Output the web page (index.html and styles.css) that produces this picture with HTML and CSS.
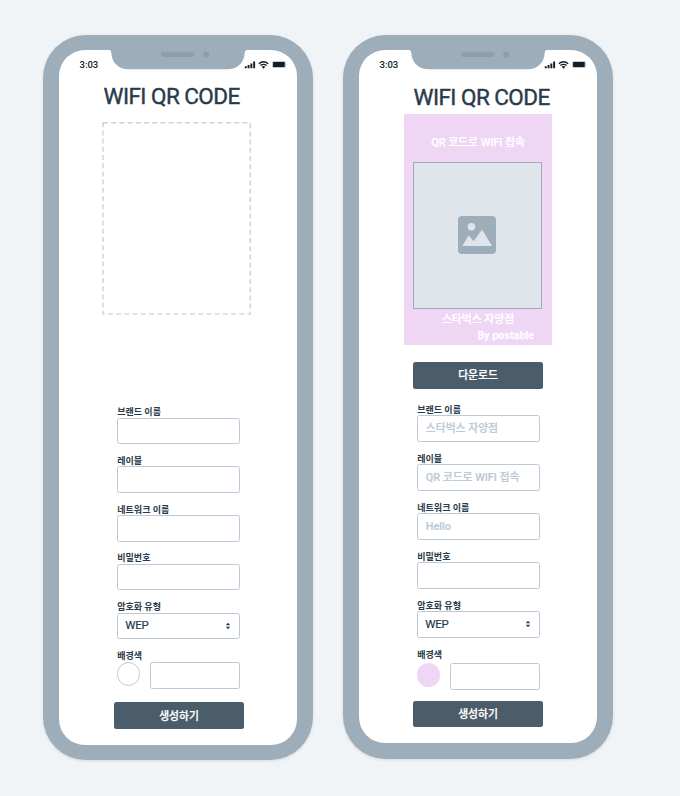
FILE: index.html
```
<!DOCTYPE html>
<html lang="ko">
<head>
<meta charset="utf-8">
<title>WIFI QR CODE</title>
<link rel="stylesheet" href="styles.css">
</head>
<body>
<svg class="defs" width="0" height="0" aria-hidden="true">
  <symbol id="status" viewBox="0 0 44 12">
    <path fill="#101c26" d="M.8 7.200h1.900v2.100H.8zM3.600 6h1.900v3.300H3.600zM6.400 4.400h1.900v4.900H6.400zM9.200 2.500h1.900v6.800H9.200z"/>
    <path fill="none" stroke="#101c26" stroke-width="1.300" d="M14.800 4.700Q19.500.8 24.200 4.700M16.400 6.600Q19.500 4.100 22.600 6.600"/>
    <path fill="#101c26" d="M17.700 7.800q1.800-1.400 3.600 0l-1.800 1.900z"/>
    <rect x="28" y="2" width="13.800" height="7" rx="1.600" fill="#c5c9cc"/>
    <rect x="29.100" y="2.900" width="11.600" height="5.200" rx=".6" fill="#101c26"/>
    <path fill="#a5abb0" d="M42.300 4.300q1.100 1.200 0 2.400z"/>
  </symbol>
  <symbol id="notch" viewBox="0 0 136 20">
    <path fill="#9eadba" d="M0 0h136v.5Q135 .5 134.700 2.500C134.500 13 127 19.300 117.500 19.300H18.500C9 19.300 1.500 13 1.300 2.500Q1 .5 0 .5z"/>
    <rect x="51" y="2.200" width="33.500" height="4.800" rx="2.400" fill="#8d9dac"/>
    <circle cx="96.200" cy="4.700" r="2.900" fill="#8d9dac"/>
  </symbol>
  <symbol id="arrows" viewBox="0 0 6 8">
    <path fill="#2c3b48" d="M3 .8 5.200 3.200H.8zM.8 4.800h4.400L3 7.200z"/>
  </symbol>
</svg>
<main class="board">
  <section class="phone">
    <div class="screen">
      <div class="status"><span>3:03</span><svg class="signal"><use href="#status"/></svg></div>
      <svg class="notch"><use href="#notch"/></svg>
      <h1 class="title">WIFI QR CODE</h1>
      <svg class="empty" viewBox="0 0 149 193"><rect x="1" y=".8" width="147.200" height="191.200"/></svg>
      <form class="form">
        <label class="field"><span>브랜드 이름</span><i class="input"></i></label>
        <label class="field"><span>레이블</span><i class="input"></i></label>
        <label class="field"><span>네트워크 이름</span><i class="input"></i></label>
        <label class="field"><span>비밀번호</span><i class="input"></i></label>
        <label class="field"><span>암호화 유형</span><i class="input select">WEP<svg><use href="#arrows"/></svg></i></label>
        <div class="color"><span>배경색</span><div class="row"><i class="swatch"></i><i class="input"></i></div></div>
      </form>
      <button class="btn">생성하기</button>
    </div>
  </section>
  <section class="phone filled">
    <div class="screen">
      <div class="status"><span>3:03</span><svg class="signal"><use href="#status"/></svg></div>
      <svg class="notch"><use href="#notch"/></svg>
      <h1 class="title">WIFI QR CODE</h1>
      <div class="card">
        <p class="caption">QR 코드로 WIFI 접속</p>
        <div class="picture">
          <svg viewBox="0 0 38 38"><rect width="38" height="38" rx="4" fill="#9eadba"/><circle cx="13.500" cy="10.700" r="3.800" fill="#e0e5ec"/><path fill="#e0e5ec" d="M4.300 30 10.500 19.400 15.700 25.300 24 13.500 34 30z"/></svg>
        </div>
        <p class="brand">스타벅스 자양점</p>
        <p class="by">By postable</p>
      </div>
      <button class="btn download">다운로드</button>
      <form class="form">
        <label class="field"><span>브랜드 이름</span><i class="input">스타벅스 자양점</i></label>
        <label class="field"><span>레이블</span><i class="input">QR 코드로 WIFI 접속</i></label>
        <label class="field"><span>네트워크 이름</span><i class="input">Hello</i></label>
        <label class="field"><span>비밀번호</span><i class="input"></i></label>
        <label class="field"><span>암호화 유형</span><i class="input select">WEP<svg><use href="#arrows"/></svg></i></label>
        <div class="color"><span>배경색</span><div class="row"><i class="swatch"></i><i class="input"></i></div></div>
      </form>
      <button class="btn">생성하기</button>
    </div>
  </section>
</main>
</body>
</html>
```
FILE: styles.css
```
* { box-sizing: border-box; margin: 0; }
body {
  background: #f0f4f7;
  color: #293b4b;
  font-family: Roboto, "Noto Sans CJK KR", sans-serif;
}
.defs { position: absolute; }
.board { display: flex; align-items: flex-start; gap: 30.5px; padding: 34.5px 0 0 43px; height: 796px; overflow: hidden; }
.phone {
  width: 269.5px;
  height: 725.5px;
  flex: none;
  padding: 15.5px;
  border-radius: 43px;
  background: #9eadba;
  box-shadow: 0 1px 3px rgba(60, 80, 100, .16);
}
.filled { height: 724.2px; }
.screen {
  position: relative;
  height: 100%;
  border-radius: 26px;
  background: #fff;
  display: flex;
  flex-direction: column;
}
.status {
  display: flex;
  justify-content: space-between;
  height: 30px;
  padding: 9px 9px 0 21px;
  font-size: 9.5px;
  font-weight: 500;
  line-height: 12px;
  color: #101c26;
}
.signal { width: 44px; height: 12px; }
.notch { position: absolute; left: 51px; top: -.5px; width: 136px; height: 20px; }
.title {
  margin: 3px 0 0 45px;
  height: 27px;
  font-size: 22.5px;
  line-height: 26px;
  font-weight: 400;
  letter-spacing: -.55px;
  -webkit-text-stroke: .4px currentColor;
  white-space: nowrap;
}
.empty {
  width: 149px;
  height: 193px;
  margin: 12px 0 0 43.7px;
  fill: none;
  stroke: #bccad7;
  stroke-width: 1.2;
  stroke-dasharray: 5 3.2;
}
.form { display: flex; flex-direction: column; width: 123px; margin: 90px 0 0 58.3px; }
.field { display: block; height: 48.8px; }
.field span, .color span {
  display: block;
  height: 12.5px;
  padding-left: .5px;
  font-size: 9px;
  line-height: 14px;
  font-weight: 700;
  white-space: nowrap;
}
.input {
  display: flex;
  align-items: center;
  height: 26.5px;
  padding: 3px 8px 0;
  border: 1px solid #bccad7;
  border-radius: 2.5px;
  color: #bccad7;
  font-style: normal;
  font-size: 10.8px;
  font-weight: 500;
  line-height: 1;
  -webkit-text-stroke: .2px currentColor;
  white-space: nowrap;
}
.select {
  justify-content: space-between;
  padding: 0 7.5px;
  color: #293b4b;
  font-size: 11.5px;
  font-weight: 400;
  letter-spacing: -.3px;
}
.select svg { width: 6px; height: 8px; }
.row { display: flex; justify-content: space-between; margin-top: 1px; }
.row .input { width: 90px; }
.swatch { width: 23.5px; height: 23.5px; border: 1px solid #bccad7; border-radius: 50%; }
.btn {
  width: 130px;
  height: 26.5px;
  margin: 13.5px 0 0 55.5px;
  padding: 0 0 2px;
  border: 0;
  border-radius: 2.5px;
  background: #4b5c6a;
  color: #fff;
  font: 500 10.8px/24px "Noto Sans CJK KR", sans-serif;
  -webkit-text-stroke: .25px currentColor;
}
.filled .title { margin: 4px 0 0 55px; }
.card {
  display: flex;
  flex-direction: column;
  align-items: center;
  width: 148px;
  height: 231px;
  margin: 3px 0 0 45.5px;
  background: #f0d6f5;
  color: #fff;
  font-size: 10.8px;
  font-weight: 500;
  line-height: 16px;
  -webkit-text-stroke: .25px currentColor;
  white-space: nowrap;
}
.caption { margin-top: 21px; }
.picture {
  display: grid;
  place-items: center;
  width: 129px;
  height: 147px;
  margin: 11px 1px 0 0;
  padding: 0 1px 2px 0;
  border: 1px solid #9eadba;
  background: #e0e5ec;
}
.picture svg { width: 38px; height: 38px; }
.brand { margin-top: 3px; }
.by { align-self: flex-end; margin-right: 18px; }
.filled .download { margin-top: 17px; margin-left: 54.5px; }
.filled .form { margin-top: 14px; }
.filled .field { height: 49px; }
.filled .row { margin-top: 3px; }
.filled .swatch { border: 0; background: #f0d6f5; }
.filled .btn { margin-left: 54.5px; }
.filled .btn:last-child { margin-top: 11px; }
```
